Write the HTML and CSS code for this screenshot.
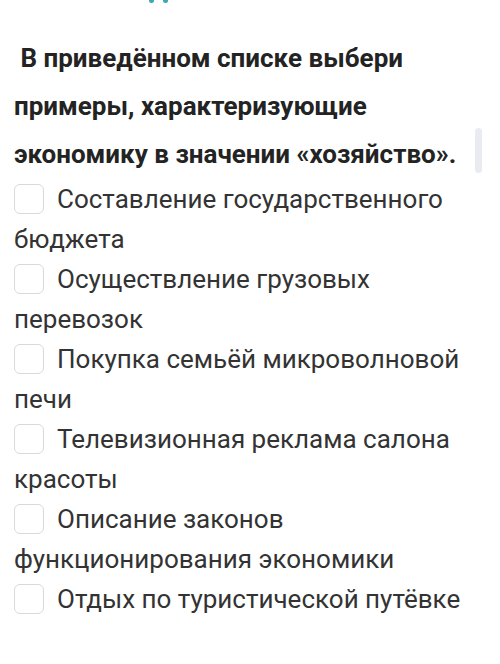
FILE: index.html
```html
<!DOCTYPE html>
<html lang="ru">

<head>
  <meta charset="UTF-8">
  <meta name="viewport" content="width=device-width, initial-scale=1.0">
  <title>Задание</title>
  <link rel="stylesheet" href="styles.css">
</head>

<body>

  <div class="top-mark">
    <span class="dot"></span>
    <span class="dot"></span>
  </div>

  <div class="question">
    <h1 class="question-title">&nbsp;В приведённом списке выбери примеры, характеризующие экономику в значении «хозяйство».</h1>
    <div class="scroll-thumb"></div>
  </div>

  <ul class="answers">
    <li><span class="check"></span>Составление государственного бюджета</li>
    <li><span class="check"></span>Осуществление грузовых перевозок</li>
    <li><span class="check"></span>Покупка семьёй микроволновой печи</li>
    <li><span class="check"></span>Телевизионная реклама салона красоты</li>
    <li><span class="check"></span>Описание законов функционирования экономики</li>
    <li><span class="check"></span>Отдых по туристической путёвке</li>
  </ul>

</body>

</html>
```

FILE: styles.css
```css
body {
  font-family: Roboto, "Liberation Sans", sans-serif;
  margin: 0;
  padding: 0;
  background-color: #FFFFFF;
  color: #2b2b2b;
}

/* bit of the header that is cut off above */
.top-mark {
  display: flex;
  gap: 9px;
  padding-left: 149px;
  height: 4px;
}

.dot {
  width: 5px;
  height: 3px;
  background-color: #3aa9b0;
  border-radius: 0 0 3px 3px;
}

.question {
  display: flex;
  align-items: flex-start;
  padding: 30px 18px 0 14px;
}

.question-title {
  flex: 1;
  margin: 0;
  font-size: 26px;
  font-weight: bold;
  line-height: 48px;
  color: #232323;
}

.scroll-thumb {
  width: 7px;
  height: 45px;
  margin-top: 94px;
  border-radius: 4px;
  background-color: #e8ecf1;
}

.answers {
  list-style-type: none;
  margin: 0;
  padding: 1px 30px 0 14px;
  font-size: 26px;
  line-height: 40px;
  color: #333;
}

.check {
  display: inline-block;
  vertical-align: middle;
  box-sizing: border-box;
  width: 30px;
  height: 30px;
  margin: -4px 13px 0 0;
  border: 1.5px solid #d9d9d9;
  border-radius: 6px;
}
```
